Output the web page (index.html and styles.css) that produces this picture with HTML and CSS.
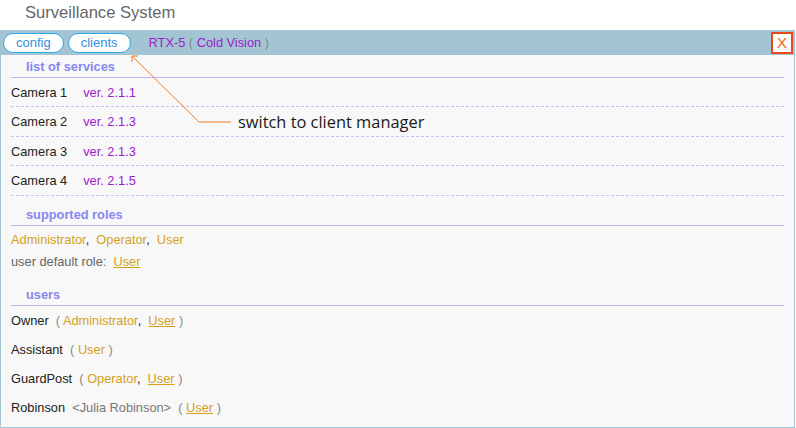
FILE: index.html
```html
<!DOCTYPE html>
<html>
<head>
<meta charset="utf-8">
<link rel="stylesheet" href="styles.css">
</head>
<body>
<div class="title">Surveillance System</div>
<div class="panel">
  <div class="bar">
    <button class="pill">config</button>
    <button class="pill">clients</button>
    <span class="device">RTX-5 <span class="paren">(</span> Cold Vision <span class="paren">)</span></span>
    <span class="close">X</span>
  </div>
  <div class="content">
    <div class="heading first">list of services</div>
    <div class="svc"><span class="name">Camera 1</span><span class="ver">ver. 2.1.1</span></div>
    <div class="svc"><span class="name">Camera 2</span><span class="ver">ver. 2.1.3</span></div>
    <div class="svc"><span class="name">Camera 3</span><span class="ver">ver. 2.1.3</span></div>
    <div class="svc"><span class="name">Camera 4</span><span class="ver">ver. 2.1.5</span></div>
    <div class="heading">supported roles</div>
    <div class="roles">
      <div class="line"><span class="role">Administrator</span>,&nbsp; <span class="role">Operator</span>,&nbsp; <span class="role">User</span></div>
      <div class="line muted">user default role:&nbsp; <span class="role u">User</span></div>
    </div>
    <div class="heading">users</div>
    <div class="user"><span class="uname">Owner</span>&nbsp; <span class="paren">(</span> <span class="role">Administrator</span>,&nbsp; <span class="role u">User</span> <span class="paren">)</span></div>
    <div class="user"><span class="uname">Assistant</span>&nbsp; <span class="paren">(</span> <span class="role">User</span> <span class="paren">)</span></div>
    <div class="user"><span class="uname">GuardPost</span>&nbsp; <span class="paren">(</span> <span class="role">Operator</span>,&nbsp; <span class="role u">User</span> <span class="paren">)</span></div>
    <div class="user"><span class="uname">Robinson</span>&nbsp; <span class="full">&lt;Julia Robinson&gt;</span>&nbsp; <span class="paren">(</span> <span class="role u">User</span> <span class="paren">)</span></div>
  </div>
  <svg class="callout" width="240" height="80" viewBox="0 0 240 80">
    <polyline points="2,2 69,68 101,68" fill="none" stroke="#f07a22" stroke-width="1"/>
    <polyline points="2,8 2,2 8,2" fill="none" stroke="#f07a22" stroke-width="1"/>
  </svg>
  <div class="note">switch to client manager</div>
</div>
</body>
</html>
```

FILE: styles.css
```css
html, body {
  margin: 0;
  padding: 0;
  background: #ffffff;
}
body {
  font-family: "Liberation Sans", Arial, sans-serif;
  font-size: 12.8px;
  color: #222;
}
.title {
  height: 30px;
  line-height: 25px;
  padding-left: 25px;
  font-size: 16.6px;
  color: #666;
}
.panel {
  position: relative;
  width: 795px;
  height: 398px;
  box-sizing: border-box;
  border: 1px solid #a3c5d3;
  border-top: none;
  background: #f8f8f8;
}
.bar {
  height: 25px;
  background: #a3c5d3;
  display: flex;
  align-items: center;
  padding: 0 2px 0 3px;
  margin-left: -1px;
  margin-right: -1px;
}
.pill {
  height: 20px;
  padding: 0 12px;
  margin: 0 4px 0 0;
  border: 1px solid #2aa9e6;
  border-radius: 10px;
  background: #fff;
  color: #3590e0;
  font-family: "Liberation Sans", Arial, sans-serif;
  font-size: 13px;
  line-height: 18px;
}
.device {
  margin-left: 14px;
  color: #9a22cc;
}
.paren {
  color: #888;
}
.close {
  margin-left: auto;
  width: 18px;
  height: 18px;
  border: 2px solid #e8481c;
  background: #fff;
  color: #f0602a;
  font-size: 15px;
  line-height: 18px;
  text-align: center;
}
.content {
  padding: 0 10px;
}
.heading {
  padding: 8px 0 0 15px;
  line-height: 21px;
  font-weight: bold;
  color: #8787ef;
  border-bottom: 1px solid #b9b9f0;
}
.heading.first {
  padding-top: 1px;
}
.svc {
  height: 28.4px;
  line-height: 29px;
  border-bottom: 1px dashed #c3c3f0;
  display: flex;
  gap: 16px;
}
.ver {
  color: #9a22cc;
}
.roles {
  padding: 3px 0;
}
.line {
  line-height: 22px;
}
.role {
  color: #d4a11b;
}
.role.u {
  text-decoration: underline;
}
.muted {
  color: #666;
}
.user {
  line-height: 29px;
}
.full {
  color: #777;
}
.callout {
  position: absolute;
  left: 129px;
  top: 24px;
}
.note {
  position: absolute;
  left: 237px;
  top: 80px;
  font-family: "Open Sans", sans-serif;
  font-size: 16.4px;
  color: #1a1a1a;
}
```
